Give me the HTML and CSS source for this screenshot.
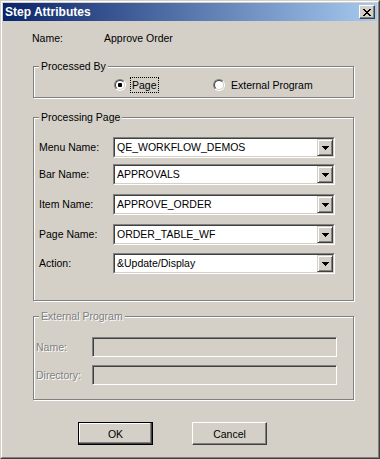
FILE: index.html
```html
<!DOCTYPE html>
<html>
<head>
<meta charset="utf-8">
<link rel="stylesheet" href="styles.css">
</head>
<body>
<div class="window">
  <div class="frame">
    <div class="titlebar">
      <span class="title">Step Attributes</span>
      <span class="close"><svg class="xglyph" width="8" height="7" viewBox="0 0 8 7" shape-rendering="crispEdges"><path fill="#000" d="M0 0h2v1H0z M6 0h2v1H6z M1 1h2v1H1z M5 1h2v1H5z M2 2h4v1H2z M3 3h2v1H3z M2 4h4v1H2z M1 5h2v1H1z M5 5h2v1H5z M0 6h2v1H0z M6 6h2v1H6z"/></svg></span>
    </div>
    <div class="content">
      <div class="name-row"><span class="name-lbl">Name:</span><span>Approve Order</span></div>

      <div class="group group-by">
        <span class="group-title">Processed By</span>
        <div class="radio-row">
          <div class="option first">
            <span class="radio"><span class="radio-in"><span class="dot"></span></span></span>
            <span class="opt-label focus">Page</span>
          </div>
          <div class="option">
            <span class="radio"><span class="radio-in"></span></span>
            <span class="opt-label">External Program</span>
          </div>
        </div>
      </div>

      <div class="group group-page">
        <span class="group-title">Processing Page</span>
        <div class="field-row">
          <span class="lbl">Menu Name:</span>
          <div class="combo"><div class="combo-in"><span class="combo-text">QE_WORKFLOW_DEMOS</span><span class="combo-btn"><svg width="7" height="4" viewBox="0 0 7 4" shape-rendering="crispEdges"><path fill="#000" d="M0 0h7v1H0z M1 1h5v1H1z M2 2h3v1H2z M3 3h1v1H3z"/></svg></span></div></div>
        </div>
        <div class="field-row gap6">
          <span class="lbl">Bar Name:</span>
          <div class="combo"><div class="combo-in"><span class="combo-text">APPROVALS</span><span class="combo-btn"><svg width="7" height="4" viewBox="0 0 7 4" shape-rendering="crispEdges"><path fill="#000" d="M0 0h7v1H0z M1 1h5v1H1z M2 2h3v1H2z M3 3h1v1H3z"/></svg></span></div></div>
        </div>
        <div class="field-row gap9">
          <span class="lbl">Item Name:</span>
          <div class="combo"><div class="combo-in"><span class="combo-text">APPROVE_ORDER</span><span class="combo-btn"><svg width="7" height="4" viewBox="0 0 7 4" shape-rendering="crispEdges"><path fill="#000" d="M0 0h7v1H0z M1 1h5v1H1z M2 2h3v1H2z M3 3h1v1H3z"/></svg></span></div></div>
        </div>
        <div class="field-row gap9">
          <span class="lbl">Page Name:</span>
          <div class="combo"><div class="combo-in"><span class="combo-text">ORDER_TABLE_WF</span><span class="combo-btn"><svg width="7" height="4" viewBox="0 0 7 4" shape-rendering="crispEdges"><path fill="#000" d="M0 0h7v1H0z M1 1h5v1H1z M2 2h3v1H2z M3 3h1v1H3z"/></svg></span></div></div>
        </div>
        <div class="field-row gap8">
          <span class="lbl">Action:</span>
          <div class="combo"><div class="combo-in"><span class="combo-text">&amp;Update/Display</span><span class="combo-btn"><svg width="7" height="4" viewBox="0 0 7 4" shape-rendering="crispEdges"><path fill="#000" d="M0 0h7v1H0z M1 1h5v1H1z M2 2h3v1H2z M3 3h1v1H3z"/></svg></span></div></div>
        </div>
      </div>

      <div class="group group-ext">
        <span class="group-title disabled">External Program</span>
        <div class="ext-row">
          <span class="ext-lbl disabled">Name:</span>
          <span class="textbox"></span>
        </div>
        <div class="ext-row gap8">
          <span class="ext-lbl disabled">Directory:</span>
          <span class="textbox"></span>
        </div>
      </div>

      <div class="buttons">
        <button class="btn default">OK</button>
        <button class="btn">Cancel</button>
      </div>
    </div>
  </div>
</div>
</body>
</html>
```
FILE: styles.css
```css
body {
  margin: 0;
  font-family: "Liberation Sans", Arial, sans-serif;
  font-size: 10.5px;
  color: #000;
}

.window {
  width: 380px;
  height: 459px;
  box-sizing: border-box;
  border: 1px solid;
  border-color: #D4D0C8 #404040 #404040 #D4D0C8;
  background: #D4D0C8;
}

.frame {
  height: 100%;
  box-sizing: border-box;
  border: 1px solid;
  border-color: #ffffff #808080 #808080 #ffffff;
  padding: 1px;
  display: flex;
  flex-direction: column;
}

.titlebar {
  height: 18px;
  flex: none;
  display: flex;
  align-items: center;
  justify-content: space-between;
  background: linear-gradient(to right, #0A246A, #A6CAF0);
  padding: 0 2px;
}

.title {
  color: #fff;
  font-weight: bold;
  font-size: 12px;
  line-height: 18px;
}

.close {
  width: 16px;
  height: 14px;
  box-sizing: border-box;
  border: 1px solid;
  border-color: #ffffff #404040 #404040 #ffffff;
  box-shadow: inset -1px -1px #808080, inset 1px 1px #D4D0C8;
  background: #D4D0C8;
  display: flex;
  align-items: center;
  justify-content: center;
}

.xglyph {
  display: block;
}

.content {
  flex: 1;
  padding-top: 11px;
}

.name-row {
  display: flex;
  height: 13px;
  line-height: 13px;
  padding-left: 29px;
}

.name-lbl {
  width: 72px;
}

.group {
  position: relative;
  margin-left: 30px;
  width: 321px;
  box-sizing: border-box;
  border: 1px solid #808080;
  box-shadow: inset 1px 1px #ffffff, 1px 1px #ffffff;
}

.group-title {
  position: absolute;
  top: -7px;
  left: 5px;
  padding: 0 2px;
  line-height: 13px;
  background: #D4D0C8;
}

.disabled {
  color: #808080;
  text-shadow: 1px 1px 0 #ffffff;
}

.group-by {
  margin-top: 21px;
  height: 32px;
  padding: 10px 0 0 80px;
}

.radio-row {
  display: flex;
  align-items: center;
  height: 16px;
}

.option {
  display: flex;
  align-items: center;
}

.option.first {
  width: 99px;
}

.radio {
  flex: none;
  width: 12px;
  height: 12px;
  box-sizing: border-box;
  border-radius: 50%;
  border: 1px solid;
  border-color: #808080 #ffffff #ffffff #808080;
}

.radio-in {
  width: 10px;
  height: 10px;
  box-sizing: border-box;
  border-radius: 50%;
  border: 1px solid;
  border-color: #404040 #D4D0C8 #D4D0C8 #404040;
  background: #fff;
  display: flex;
  align-items: center;
  justify-content: center;
}

.dot {
  width: 4px;
  height: 4px;
  border-radius: 1px;
  background: #000;
}

.opt-label {
  margin-left: 4px;
  padding: 1px;
  border: 1px dotted transparent;
  line-height: 12px;
}

.opt-label.focus {
  border-color: #000;
}

.group-page {
  margin-top: 19px;
  height: 184px;
  padding: 19px 0 0 5px;
}

.field-row {
  display: flex;
  align-items: center;
  height: 21px;
}

.gap6 { margin-top: 6px; }
.gap8 { margin-top: 8px; }
.gap9 { margin-top: 9px; }

.lbl {
  width: 74px;
  line-height: 13px;
}

.combo {
  width: 222px;
  height: 21px;
  box-sizing: border-box;
  border: 1px solid;
  border-color: #808080 #ffffff #ffffff #808080;
  display: flex;
}

.combo-in {
  flex: 1;
  display: flex;
  align-items: center;
  border: 1px solid;
  border-color: #404040 #D4D0C8 #D4D0C8 #404040;
  background: #fff;
}

.combo-text {
  flex: 1;
  padding-left: 2px;
  line-height: 13px;
}

.combo-btn {
  flex: none;
  width: 16px;
  height: 17px;
  box-sizing: border-box;
  border: 1px solid;
  border-color: #D4D0C8 #404040 #404040 #D4D0C8;
  box-shadow: inset 1px 1px #ffffff, inset -1px -1px #808080;
  background: #D4D0C8;
  display: flex;
  align-items: center;
  justify-content: center;
}

.combo-btn svg {
  display: block;
}

.group-ext {
  margin-top: 15px;
  height: 84px;
  padding: 20px 0 0 2px;
}

.ext-row {
  display: flex;
  align-items: center;
  height: 20px;
}

.ext-lbl {
  width: 56px;
  line-height: 13px;
}

.textbox {
  width: 245px;
  height: 20px;
  box-sizing: border-box;
  border: 1px solid;
  border-color: #808080 #ffffff #ffffff #808080;
  box-shadow: inset 1px 1px #404040, inset -1px -1px #D4D0C8;
  background: #D4D0C8;
}

.buttons {
  display: flex;
  gap: 39px;
  margin-top: 22px;
  padding-left: 75px;
}

.btn {
  width: 75px;
  height: 23px;
  box-sizing: border-box;
  margin: 0;
  padding: 0;
  font: inherit;
  color: #000;
  border: 1px solid;
  border-color: #ffffff #404040 #404040 #ffffff;
  box-shadow: inset -1px -1px #808080, inset 1px 1px #D4D0C8;
  background: #D4D0C8;
  display: flex;
  align-items: center;
  justify-content: center;
}

.btn.default {
  border: 1px solid #000;
  box-shadow: inset -1px -1px #404040, inset -2px -2px #808080, inset 1px 1px #ffffff;
}
```
